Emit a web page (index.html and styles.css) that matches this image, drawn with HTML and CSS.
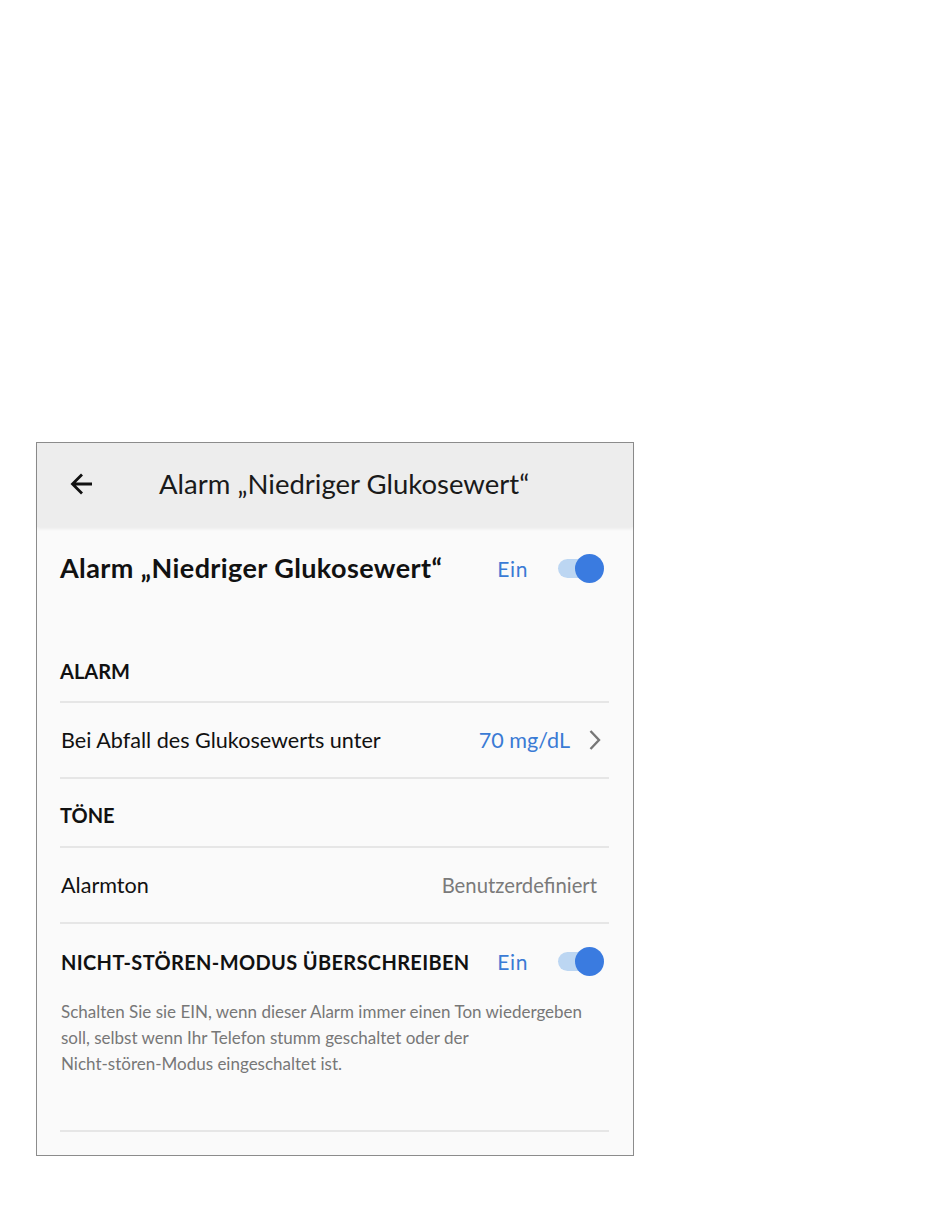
FILE: index.html
```html
<!DOCTYPE html>
<html>
<head>
  <meta charset="utf-8">
  <link rel="stylesheet" href="styles.css">
</head>
<body>
  <div class="phone">
    <!-- Top bar -->
    <div class="app-bar">
      <svg class="back-icon" width="24" height="24" viewBox="0 0 24 24">
        <path d="M22 12H3M12 2.5L2.5 12 12 21.5" fill="none" stroke="#111" stroke-width="2.8"/>
      </svg>
      <span class="app-bar-title">Alarm „Niedriger Glukosewert“</span>
    </div>

    <div class="content">
      <div class="main-row">
        <span class="main-title">Alarm „Niedriger Glukosewert“</span>
        <span class="state">Ein</span>
        <span class="toggle on"><span class="knob"></span></span>
      </div>

      <h2 class="section-title first">ALARM</h2>
      <div class="setting-row">
        <span class="setting-label">Bei Abfall des Glukosewerts unter</span>
        <span class="setting-value blue">70 mg/dL</span>
        <svg class="chevron" width="14" height="22" viewBox="0 0 14 22">
          <path d="M2.5 2L11 11 2.5 20" fill="none" stroke="#777" stroke-width="2.4"/>
        </svg>
      </div>

      <h2 class="section-title">TÖNE</h2>
      <div class="setting-row">
        <span class="setting-label">Alarmton</span>
        <span class="setting-value grey">Benutzerdefiniert</span>
      </div>

      <div class="dnd-row">
        <span class="dnd-title">NICHT-STÖREN-MODUS ÜBERSCHREIBEN</span>
        <span class="state">Ein</span>
        <span class="toggle on"><span class="knob"></span></span>
      </div>
      <div class="hint-block">
        <p class="hint">Schalten Sie sie EIN, wenn dieser Alarm immer einen Ton wiedergeben soll, selbst wenn Ihr Telefon stumm geschaltet oder der <span class="nowrap">Nicht-stören-Modus</span> eingeschaltet ist.</p>
      </div>
    </div>
  </div>
</body>
</html>
```

FILE: styles.css
```css
body {
  margin: 0;
  background: #fff;
  font-family: Lato, "Liberation Sans", sans-serif;
  color: #111;
}

.phone {
  width: 596px;
  margin: 442px 0 0 36px;
  border: 1px solid #8c8c8c;
  background: #fafafa;
}

.app-bar {
  height: 84px;
  display: flex;
  align-items: center;
  background: #ededed;
  box-shadow: 0 2px 3px rgba(0,0,0,0.06);
  position: relative;
}

.back-icon {
  margin-left: 33px;
  margin-top: -2px;
}

.app-bar-title {
  margin-left: 65px;
  margin-top: -3px;
  font-size: 27.5px;
  color: #1a1a1a;
}

.content {
  padding: 0 24px 23px 23px;
}

.main-row {
  display: flex;
  align-items: center;
  height: 82px;
}

.main-title {
  flex: 1;
  font-size: 27px;
  font-weight: 700;
  letter-spacing: 0.4px;
  margin-top: -2px;
}

.state {
  color: #3a7bd5;
  font-size: 21px;
  letter-spacing: 0.6px;
  margin-right: 30px;
}

.toggle {
  position: relative;
  width: 46px;
  height: 29px;
  flex: none;
  margin-right: 5px;
}

.toggle::before {
  content: "";
  position: absolute;
  left: 0;
  top: 5px;
  width: 36px;
  height: 19px;
  border-radius: 10px;
  background: #bcd6f2;
}

.toggle .knob {
  position: absolute;
  right: 0;
  top: 0;
  width: 29px;
  height: 29px;
  border-radius: 50%;
  background: #3a7be0;
}

.section-title {
  margin: 0;
  font-size: 20px;
  font-weight: 700;
  padding: 24px 0 19px;
  border-bottom: 2px solid #e6e6e6;
}

.section-title.first {
  margin-top: 29px;
  padding: 21px 0 18px;
}

.setting-row {
  display: flex;
  align-items: center;
  height: 74px;
  border-bottom: 2px solid #e6e6e6;
}

.setting-label {
  flex: 1;
  font-size: 21.6px;
  margin-left: 1px;
}

.setting-value {
  font-size: 21.6px;
}

.setting-value.blue {
  color: #3a7bd5;
}

.setting-value.grey {
  color: #7a7a7a;
  font-size: 20.3px;
  margin-right: 12px;
}

.chevron {
  margin-left: 18px;
  margin-right: 7px;
}

.dnd-row {
  display: flex;
  align-items: center;
  height: 75px;
}

.dnd-title {
  flex: 1;
  font-size: 20px;
  font-weight: 700;
  letter-spacing: 0.35px;
  margin-left: 1px;
}

.hint-block {
  padding: 0 0 53px 1px;
  border-bottom: 2px solid #e6e6e6;
}

.hint {
  margin: 0;
  max-width: 530px;
  font-size: 17px;
  line-height: 26px;
  color: #777;
}

.nowrap {
  white-space: nowrap;
}
```
